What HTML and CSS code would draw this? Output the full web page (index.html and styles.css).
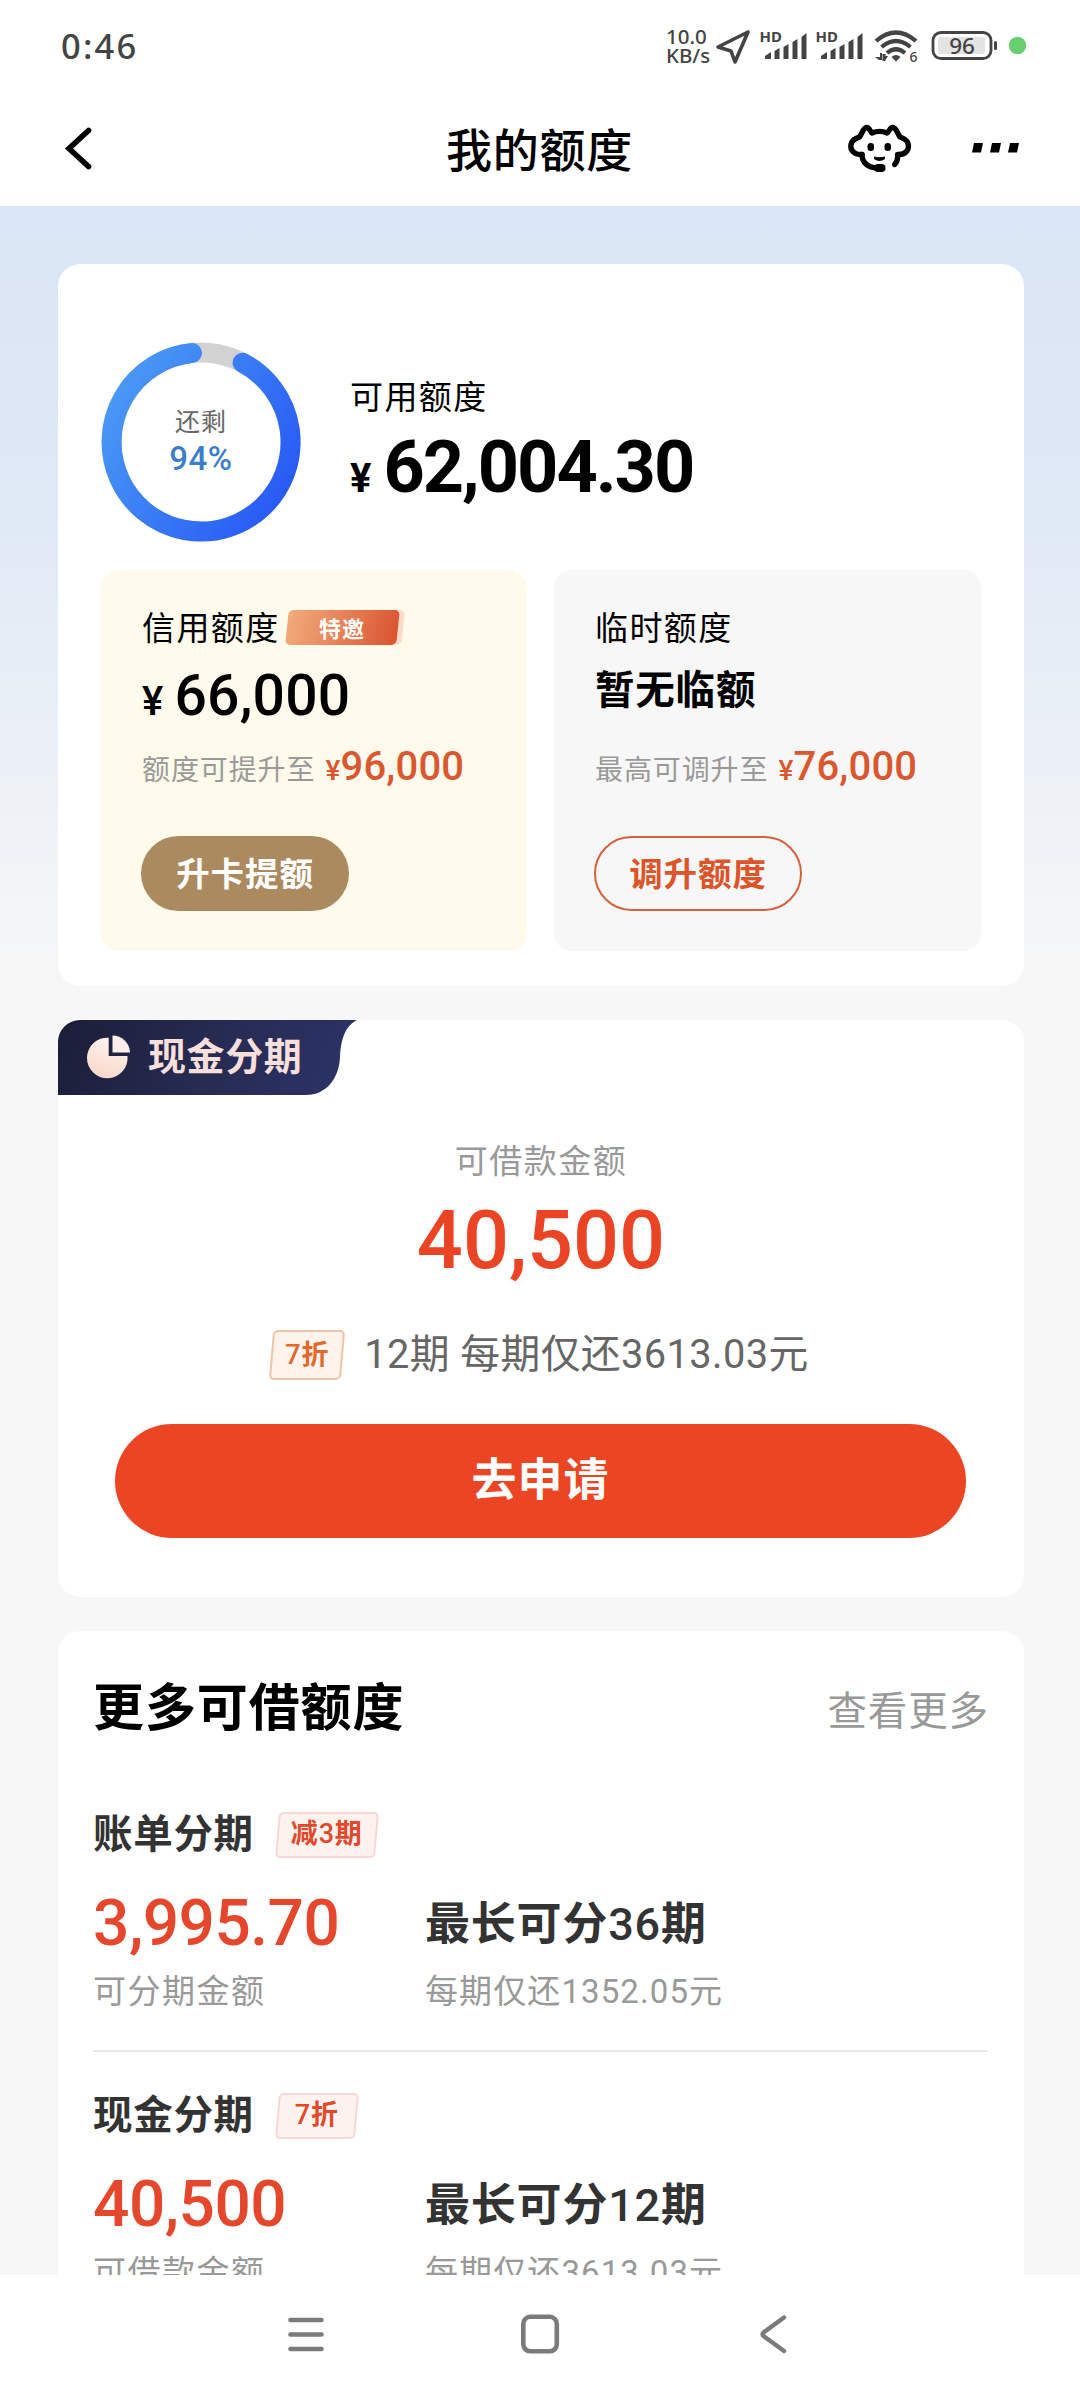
FILE: index.html
```html
<!DOCTYPE html>
<html lang="zh-CN">
<head>
<meta charset="utf-8">
<title>我的额度</title>
<link rel="stylesheet" href="styles.css">
</head>
<body>
<div class="phone">
  <div class="status">
    <span class="clock">0:46</span>
    <div class="indicators">
      <div class="speed"><span>10.0</span><span>KB/s</span></div>
      <svg class="status-icons" width="320" height="44" viewBox="710 22 320 44">
        <path d="M748 32 L718 47 L731 51 L735 62 Z" fill="none" stroke="#444" stroke-width="3.6" stroke-linejoin="round"/>
        <g fill="#444">
          <text class="hd" x="759.5" y="41.5">HD</text>
          <path d="M765 59v-3l6-4v7zM774.500 59v-8l5-3v11zM783.500 59v-12l5-3v15zM792.500 59v-17l5-3v20zM801.500 59v-22l5-4v26z"/>
          <text class="hd" x="815.500" y="41.500">HD</text>
          <path d="M821 59v-3l6-4v7zM830.500 59v-8l5-3v11zM839.500 59v-12l5-3v15zM848.500 59v-17l5-3v20zM857.500 59v-22l5-4v26z"/>
          <path d="M891.500 57q4.500-4 9 0l-4.500 4.500z"/>
          <path d="M875 57l5 0v-4h2v7h-3zM882.500 61v-7h3v2h2.500l-3 5z"/>
          <text class="six" x="909.500" y="61.500">6</text>
        </g>
        <g fill="none" stroke="#444" stroke-width="4.200">
          <path d="M876 41q20-17 40 0"/><path d="M881.500 47q14.500-12 29 0"/><path d="M887 53q9-7.500 18 0"/>
        </g>
        <rect x="933" y="32.500" width="58" height="26" rx="8" fill="none" stroke="#444" stroke-width="2.800"/>
        <rect x="938" y="37" width="47" height="17" rx="3" fill="#e3e3e3"/>
        <rect x="994" y="41" width="3" height="9" rx="1.500" fill="#444"/>
        <text class="battery" x="962" y="53.500" text-anchor="middle">96</text>
        <circle cx="1017.500" cy="45.500" r="8.700" fill="#67cf70"/>
      </svg>
    </div>
  </div>

  <header class="header">
    <svg width="40" height="52" viewBox="60 121 40 52"><path d="M88.500 129.500L69 147.500L88.500 165.500" fill="none" stroke="#000" stroke-width="5.600" stroke-linecap="round" stroke-linejoin="miter"/></svg>
    <h1>我的额度</h1>
    <div class="actions">
      <svg width="66" height="50" viewBox="847 122 66 50">
        <g fill="none" stroke="#000" stroke-width="5.400" stroke-linecap="round" stroke-linejoin="round">
          <path d="M862 153.500C852 154 849.500 147 851.500 142C853 138 856.500 137 859.500 136C862 133 863 126.500 867 126.500C869 126.500 870 130 872 132C877 129.800 882 129.800 887 132C889.500 130 890 126.500 892.500 126.500C896.500 126.500 897.500 133 900 136C903 137 906.500 138.500 907.800 142C910 148 906 154 897.500 153.500C898 157 896.500 161.500 894.700 163.500"/>
          <path d="M862 153.500C862 161 867 166.500 878 167"/>
        </g>
        <rect x="867.500" y="142" width="6.500" height="8" rx="3.200"/><rect x="884.500" y="142" width="6.500" height="8" rx="3.200"/>
        <path d="M874 155.500q5.500 1.500 11 0v2.500q-5.500 4-11 0z"/>
        <rect x="874" y="163" width="11.500" height="8" rx="4"/>
      </svg>
      <svg width="48" height="12" viewBox="971 141 48 12"><path d="M974 142h9l-2 9.500h-9zM992 142h9l-2 9.500h-9zM1010 142h9l-2 9.500h-9z"/></svg>
    </div>
  </header>

  <main class="content">
    <section class="card summary">
      <div class="overview">
        <div class="ring">
          <svg width="200" height="200" viewBox="0 0 200 200">
            <defs><linearGradient id="ring" x1="0" y1="0.300" x2="0.900" y2="0.850"><stop offset="0" stop-color="#4897f5"/><stop offset="1" stop-color="#295cf5"/></linearGradient></defs>
            <circle cx="100" cy="100" r="89.500" fill="none" stroke="#d2d2d2" stroke-width="20"/>
            <path d="M141.600 20.750A89.500 89.500 0 1 1 91 11" fill="none" stroke="url(#ring)" stroke-width="20" stroke-linecap="round"/>
          </svg>
          <div class="ring-text"><span>还剩</span><strong>94%</strong></div>
        </div>
        <div class="available">
          <div class="label">可用额度</div>
          <div class="total"><small>¥</small>62,004.30</div>
        </div>
      </div>
      <div class="limits">
        <div class="limit credit">
          <div class="limit-head"><span class="label">信用额度</span><span class="invite"><b>特邀</b></span></div>
          <div class="amount"><small>¥</small>66,000</div>
          <div class="raise"><span>额度可提升至</span><b><small>¥</small>96,000</b></div>
          <button class="pill filled">升卡提额</button>
        </div>
        <div class="limit temp">
          <div class="limit-head"><span class="label">临时额度</span></div>
          <div class="none">暂无临额</div>
          <div class="raise"><span>最高可调升至</span><b><small>¥</small>76,000</b></div>
          <button class="pill outline">调升额度</button>
        </div>
      </div>
    </section>

    <section class="card cash">
      <div class="tab">
        <svg class="tab-bg" width="300" height="75" viewBox="0 0 300 75">
          <defs>
            <linearGradient id="tab" x1="0" y1="0" x2="1" y2="0.100"><stop offset="0" stop-color="#1a1e38"/><stop offset="0.600" stop-color="#272c54"/><stop offset="1" stop-color="#2b3265"/></linearGradient>
            <linearGradient id="pie" x1="0.700" y1="0" x2="0.400" y2="1"><stop offset="0" stop-color="#fff4f0"/><stop offset="1" stop-color="#f9d7c9"/></linearGradient>
          </defs>
          <path d="M0 0H299C289 5 283 16 282 37C281 59 268 75 248 75H0Z" fill="url(#tab)"/>
          <path d="M50.700 17.700A20.300 20.300 0 1 0 69.500 36H50.700Z" fill="url(#pie)"/>
          <path d="M54.500 15.500V32.500H72A17.500 17.500 0 0 0 54.500 15.500Z" fill="#fdeee9"/>
        </svg>
        <span class="tab-name">现金分期</span>
      </div>
      <div class="cash-label">可借款金额</div>
      <div class="cash-amount">40,500</div>
      <div class="cash-plan"><span class="tag orange"><b><i>7</i>折</b></span><span class="plan">12期 每期仅还3613.03元</span></div>
      <button class="apply">去申请</button>
    </section>

    <section class="card more">
      <div class="more-head"><h2>更多可借额度</h2><a>查看更多</a></div>
      <article class="product">
        <div class="product-head"><h3>账单分期</h3><span class="tag"><b>减<i>3</i>期</b></span></div>
        <div class="facts">
          <div><div class="price">3,995.70</div><p>可分期金额</p></div>
          <div><div class="term">最长可分<i>36</i>期</div><p>每期仅还1352.05元</p></div>
        </div>
      </article>
      <article class="product">
        <div class="product-head"><h3>现金分期</h3><span class="tag wide"><b><i>7</i>折</b></span></div>
        <div class="facts">
          <div><div class="price">40,500</div><p>可借款金额</p></div>
          <div><div class="term">最长可分<i>12</i>期</div><p>每期仅还3613.03元</p></div>
        </div>
      </article>
    </section>
  </main>

  <nav class="sysnav">
    <svg width="40" height="44" viewBox="0 0 40 44"><path d="M4.500 8h31M4.500 22.500h31M4.500 37h31" stroke="#7b7b7b" stroke-width="4.600" stroke-linecap="round"/></svg>
    <svg width="44" height="44" viewBox="0 0 44 44"><rect x="5.300" y="4.800" width="33.500" height="34.500" rx="7" fill="none" stroke="#7b7b7b" stroke-width="4.600"/></svg>
    <svg width="40" height="44" viewBox="0 0 40 44"><path d="M30 5.500L9.500 20.500Q7.500 22.300 9.500 24L30 39" fill="none" stroke="#7b7b7b" stroke-width="4.400" stroke-linecap="round"/></svg>
  </nav>
</div>
</body>
</html>
```
FILE: styles.css
```css
* { box-sizing: border-box; margin: 0; padding: 0; }
body {
  width: 1080px;
  background: #fff;
  color: #000;
  font-family: Roboto, "Noto Sans CJK SC", sans-serif;
}
button { font-family: inherit; border: 0; display: block; }
svg { display: block; flex: none; }
i { font-style: normal; font-weight: 500; }
.phone { width: 1080px; height: 2400px; display: flex; flex-direction: column; overflow: hidden; }

.status {
  height: 92px; flex: none; padding: 0 50px 0 61px;
  display: flex; justify-content: space-between;
  font-family: "Noto Sans", sans-serif; color: #444;
}
.clock { font-size: 34.5px; font-weight: 500; line-height: 92px; letter-spacing: 2.2px; }
.indicators { display: flex; padding-top: 22px; }
.speed { display: flex; flex-direction: column; width: 44px; padding-top: 5px; font-size: 20.5px; line-height: 19px; font-weight: 500; white-space: nowrap; }
.hd { font: 700 15px "Noto Sans", sans-serif; }
.six { font: 500 14px "Noto Sans", sans-serif; }
.battery { font: 500 22.5px "Noto Sans", sans-serif; fill: #444; }

.header {
  height: 114px; flex: none; padding: 0 61px 3px 60px;
  display: grid; grid-template-columns: 1fr auto 1fr; align-items: center;
}
.header h1 { font-size: 46px; font-weight: 500; line-height: 60px; padding-top: 6px; letter-spacing: 0.8px; }
.actions { display: flex; align-items: center; justify-content: flex-end; gap: 58px; }

.content {
  height: 2069px; flex: none; overflow: hidden; padding: 58px 56px 0 58px;
  background: linear-gradient(#dae5f5 0, #dfe9f6 300px, #f7f7f7 780px);
  display: flex; flex-direction: column; gap: 34px;
}
.card { background: #fff; border-radius: 22px; flex: none; }

.summary { height: 722px; padding: 78px 43px 35px; }
.overview { display: flex; gap: 49px; height: 200px; }
.ring { display: grid; width: 200px; }
.ring > * { grid-area: 1 / 1; }
.ring-text { display: flex; flex-direction: column; align-items: center; padding-top: 65px; }
.ring-text span { font-size: 25px; line-height: 32px; letter-spacing: 1px; color: #666; }
.ring-text strong { font-size: 33px; line-height: 40px; font-weight: 500; letter-spacing: 0.5px; color: #3d7ec8; }
.label { font-size: 33px; line-height: 36px; letter-spacing: 1.4px; }
.available { padding-top: 38px; }
.total { margin-top: 16px; font-size: 72px; line-height: 72px; font-weight: 700; letter-spacing: -2px; }
small { line-height: 0; }
.total small { font-size: 40px; margin-right: 14px; }

.limits { display: grid; grid-template-columns: 426px 427px; justify-content: space-between; margin-top: 28px; }
.limit { display: flex; flex-direction: column; align-items: flex-start; height: 381px; border-radius: 18px; padding: 41px 0 0 41px; }
.credit { background: #fffaec; }
.temp { background: #f7f7f7; }
.limit-head { display: flex; gap: 6px; height: 36px; }
.invite { position: relative; width: 113px; height: 35px; margin-top: -1px; color: #fff; text-align: center; isolation: isolate; }
.invite b { font-size: 22px; line-height: 39px; letter-spacing: 1px; display: block; }
.invite::before, .invite::after { content: ""; position: absolute; z-index: -1; inset: 0 1px; border-radius: 5px; transform: skewX(-6deg); background: linear-gradient(100deg, #f2ac7d, #d9542f); }
.invite::after { z-index: -2; inset: 0 -4px 0 20px; background: #fadbc9; }
.amount { margin-top: 19px; font-size: 57px; line-height: 60px; height: 60px; font-weight: 500; letter-spacing: 0.2px; }
.amount small { font-size: 40px; margin-right: 11px; }
.none { margin: 14px 0 5px; font-size: 39.5px; line-height: 60px; font-weight: 700; letter-spacing: 0.8px; }
.raise { display: flex; align-items: baseline; height: 40px; margin-top: 21px; font-size: 28px; line-height: 40px; letter-spacing: 0.9px; color: #999; }
.raise b { font-size: 40px; line-height: 40px; font-weight: 500; letter-spacing: 0.2px; color: #d95830; margin-left: 10px; }
.raise small { font-size: 28px; }
.pill { margin: 49px 0 0 -1px; height: 75px; width: 208px; border-radius: 38px; font-size: 33.5px; line-height: 77px; font-weight: 700; letter-spacing: 0.9px; background: none; }
.filled { background: #ac8a60; color: #fff; }
.outline { border: 2px solid #d4603c; line-height: 73px; color: #dc5429; }

.cash { height: 577px; overflow: hidden; display: flex; flex-direction: column; align-items: center; }
.tab { align-self: flex-start; display: grid; height: 75px; }
.tab > * { grid-area: 1 / 1; }
.tab-name { position: relative; padding-left: 90px; font-size: 38px; line-height: 74px; font-weight: 700; letter-spacing: 0.6px; color: #f9dfdb; }
.cash-label { margin-top: 47px; font-size: 33px; line-height: 40px; letter-spacing: 1.5px; color: #999; }
.cash-amount { margin-top: 14px; font-size: 81px; line-height: 90px; font-weight: 500; color: #ea4425; }
.cash-plan { display: flex; align-items: center; gap: 19px; height: 50px; margin: 44px 4px 0 0; font-size: 39.8px; line-height: 50px; letter-spacing: 0.4px; color: #666; }
.apply { margin: 44px 1px 0 0; width: 851px; height: 114px; border-radius: 57px; background: #eb4524; color: #fff; font-size: 45px; line-height: 114px; font-weight: 700; letter-spacing: 1px; }

.tag { position: relative; isolation: isolate; height: 46px; padding: 0 16px; color: #e0492b; }
.tag b { display: block; font-size: 27px; line-height: 44px; font-weight: 700; letter-spacing: 0.8px; }
.tag::before { content: ""; position: absolute; z-index: -1; inset: 0 2px; border: 2px solid #f6d9d4; border-radius: 5px; background: #fef2ef; transform: skewX(-5deg); }
.tag.wide { padding: 0 20px; }
.tag.orange { height: 50px; padding: 0 16px; color: #df6a2b; }
.tag.orange b { line-height: 50px; }
.tag.orange::before { border-color: #efc5a8; background: #fff3ec; }

.more { height: 900px; padding: 48px 36px 0 35px; }
.more-head { display: flex; justify-content: space-between; height: 60px; margin-bottom: 32px; }
.more-head h2 { font-size: 51px; line-height: 60px; font-weight: 700; letter-spacing: 0.9px; }
.more-head a { font-size: 39.5px; line-height: 65px; letter-spacing: 0.9px; margin-right: -1px; color: #999; }
.product { padding: 41px 0 38px; border-bottom: 2px solid #eaeaea; }
.product-head { display: flex; gap: 21px; height: 46px; }
.product-head h3 { font-size: 39.5px; line-height: 46px; font-weight: 700; letter-spacing: 0.7px; color: #333; }
.facts { display: grid; grid-template-columns: 332px 1fr; margin-top: 30px; }
.price { font-size: 64px; line-height: 72px; height: 70px; font-weight: 500; letter-spacing: -0.5px; color: #e4472b; }
.term { font-size: 45px; line-height: 73px; height: 70px; font-weight: 700; letter-spacing: 0.8px; color: #333; }
.facts p { margin-top: 14px; font-size: 33px; line-height: 40px; letter-spacing: 1.5px; color: #999; }
.facts > :last-child p { letter-spacing: 1.1px; }

.sysnav { height: 125px; flex: none; display: grid; grid-template-columns: 40px 44px 40px; gap: 192px; justify-content: center; padding-top: 37px; background: #fff; }
```
